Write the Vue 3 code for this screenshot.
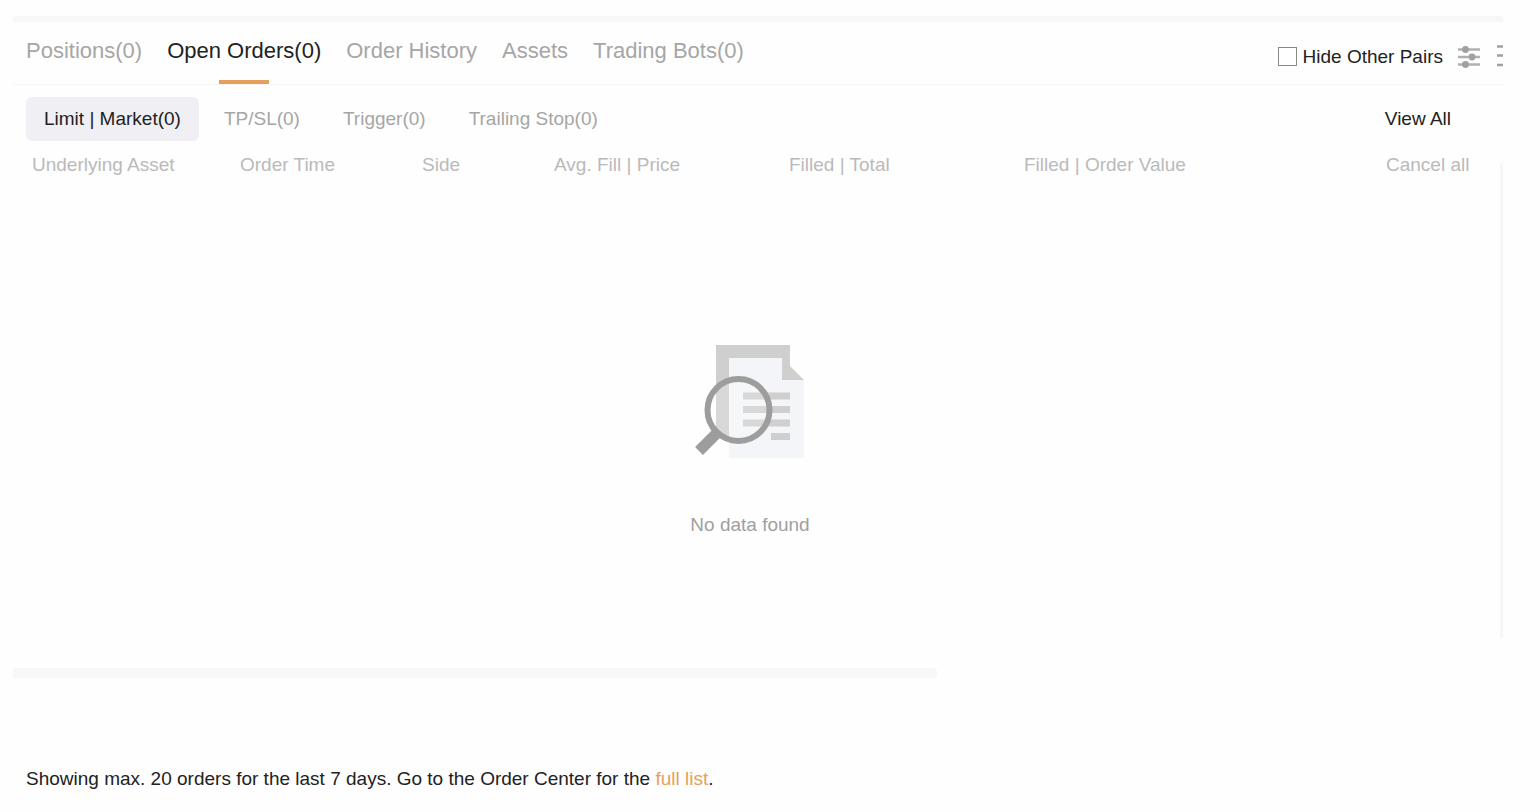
<script setup>
import { ref } from 'vue'

const tabs = ['Positions(0)', 'Open Orders(0)', 'Order History', 'Assets', 'Trading Bots(0)']
const orderTypes = ['Limit | Market(0)', 'TP/SL(0)', 'Trigger(0)', 'Trailing Stop(0)']

const activeTab = ref('Open Orders(0)')
const activeType = ref('Limit | Market(0)')
const hideOthers = ref(false)
</script>

<template>
  <main class="orders">
    <header class="orders__bar">
      <nav class="orders__tabs">
        <button
          v-for="tab in tabs"
          :key="tab"
          type="button"
          class="tab"
          :class="{ 'tab--active': tab === activeTab }"
          @click="activeTab = tab"
        >
          {{ tab }}
        </button>
      </nav>
      <div class="orders__tools">
        <label class="hide-pairs">
          <input v-model="hideOthers" type="checkbox" class="hide-pairs__box" />
          Hide Other Pairs
        </label>
        <button type="button" class="icon-button" aria-label="Settings">
          <svg width="23" height="22" viewBox="0 0 23 22">
            <path d="M1 3.5h22M1 11h22M1 18.5h22" stroke="#b0b0b0" stroke-width="2.4" />
            <circle cx="8.500" cy="3.500" r="3.400" fill="#a0a0a0" />
            <circle cx="15" cy="11" r="3.4" fill="#a0a0a0" />
            <circle cx="8.5" cy="18.5" r="3.4" fill="#a0a0a0" />
          </svg>
        </button>
        <button type="button" class="icon-button icon-button--last" aria-label="Layout">
          <svg width="7" height="24" viewBox="0 0 7 24">
            <path d="M1 1.500h6M1 10.500h6M1 20h6" stroke="#a0a0a0" stroke-width="2.600" />
          </svg>
        </button>
      </div>
    </header>

    <div class="orders__filters">
      <div class="orders__types">
        <button
          v-for="type in orderTypes"
          :key="type"
          type="button"
          class="type"
          :class="{ 'type--active': type === activeType }"
          @click="activeType = type"
        >
          {{ type }}
        </button>
      </div>
      <a href="#" class="orders__all">View All</a>
    </div>

    <section class="orders__body">
      <table class="orders__table">
        <thead>
          <tr>
            <th class="col-asset">Underlying Asset</th>
            <th class="col-time">Order Time</th>
            <th class="col-side">Side</th>
            <th class="col-price">Avg. Fill | Price</th>
            <th class="col-total">Filled | Total</th>
            <th>Filled | Order Value</th>
            <th class="col-cancel"><button type="button" class="cancel">Cancel all</button></th>
          </tr>
        </thead>
      </table>
      <div class="empty">
        <svg width="110" height="114" viewBox="0 0 110 114">
          <path d="M34 13h53v22h22v78H34z" fill="#f4f5f8" />
          <path d="M21 0h74v21l14 14H87V13H34v79H21z" fill="#cfcfcf" />
          <path d="M48 51h47M48 64.5h47M48 78h47M76 91.5h19" stroke="#cfcfcf" stroke-width="7" />
          <circle cx="43.5" cy="65" r="31" fill="#fff" fill-opacity=".2" stroke="#9d9d9d" stroke-width="6" />
          <path d="M23 87 4 106" stroke="#9d9d9d" stroke-width="11" />
        </svg>
        <p class="empty__text">No data found</p>
      </div>
    </section>

    <div class="orders__scroll"></div>

    <p class="orders__note">
      Showing max. 20 orders for the last 7 days. Go to the Order Center for the
      <a href="#" class="orders__link">full list</a>.
    </p>
  </main>
</template>

<style>
body {
  background: #fefefe;
}
</style>

<style scoped>
.orders {
  margin: 16px 37px 0 13px;
  border-top: 6px solid #f6f7f9;
  font-family: "Liberation Sans", Arial, sans-serif;
  font-size: 19px;
  line-height: 24px;
  color: #222;
}
button {
  padding: 0;
  border: none;
  background: none;
  font: inherit;
  color: inherit;
  cursor: pointer;
}
a {
  color: inherit;
  text-decoration: none;
}
.orders__bar {
  display: flex;
  justify-content: space-between;
  border-bottom: 1px solid #f4f4f5;
}
.orders__tabs {
  display: flex;
  gap: 25px;
  padding-left: 13px;
}
.tab {
  position: relative;
  padding: 16px 0 20px;
  font-size: 22px;
  line-height: 26px;
  white-space: nowrap;
  color: #a6a6a6;
}
.tab--active {
  color: #222;
}
.tab--active::after {
  content: "";
  position: absolute;
  bottom: 0;
  left: calc(50% - 25px);
  width: 50px;
  height: 4px;
  background: #e5a05c;
}
.orders__tools {
  display: flex;
  align-items: center;
  padding-top: 7px;
}
.hide-pairs {
  display: flex;
  align-items: center;
  gap: 6px;
  white-space: nowrap;
}
.hide-pairs__box {
  appearance: none;
  width: 19px;
  height: 19px;
  margin: 0;
  border: 1px solid #888;
  background: #fff;
}
.hide-pairs__box:checked {
  background: #e5a05c;
}
.icon-button {
  display: flex;
  margin-left: 14px;
}
.icon-button--last {
  margin-left: 16px;
}
.orders__filters {
  display: flex;
  align-items: center;
  justify-content: space-between;
  padding: 12px 52px 0 13px;
}
.orders__types {
  display: flex;
  align-items: center;
  gap: 43px;
}
.type {
  white-space: nowrap;
  color: #a6a6a6;
}
.type--active {
  margin-right: -18px;
  padding: 10px 18px;
  border-radius: 6px;
  background: #f0eff4;
  color: #222;
}
.orders__body {
  position: relative;
  min-height: 485px;
  margin-top: 12px;
}
/* vertical scroll track over the right edge of the list */
.orders__body::after {
  content: "";
  position: absolute;
  top: 10px;
  right: 0;
  bottom: 0;
  width: 3px;
  background: #f7f7f8;
}
.orders__table {
  width: 100%;
  padding-left: 19px;
  border-spacing: 0;
  table-layout: fixed;
}
th {
  padding: 0;
  font-weight: normal;
  text-align: left;
  white-space: nowrap;
  color: #bababa;
}
.col-asset {
  width: 208px;
}
.col-time {
  width: 182px;
}
.col-side {
  width: 132px;
}
.col-price,
.col-total {
  width: 235px;
}
.col-cancel {
  width: 117px;
}
.empty {
  display: flex;
  flex-direction: column;
  align-items: center;
  padding: 168px 16px 0 0;
}
.empty__text {
  margin: 54px 0 0;
  color: #a0a0a0;
}
.orders__scroll {
  width: 62%;
  height: 10px;
  margin-top: 30px;
  border-radius: 0 4px 4px 0;
  background: #f6f7f9;
}
.orders__note {
  margin: 89px 0 0;
  padding-left: 13px;
}
.orders__link {
  color: #e5a05c;
}
</style>
